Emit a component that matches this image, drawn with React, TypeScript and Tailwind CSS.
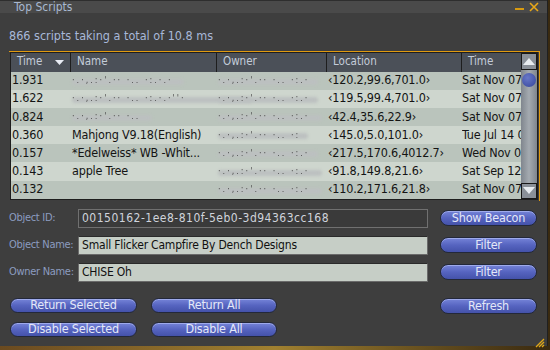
const font = "font-['DejaVu_Sans_Condensed','DejaVu_Sans',sans-serif]";

type Row = {
  time: string;
  name: string;
  owner: string;
  loc: string;
  date: string;
  hideName?: number;
  hideOwner?: number;
};

const rows: Row[] = [
  { time: "1.931", name: "", owner: "", loc: "‹120.2,99.6,701.0›", date: "Sat Nov 07", hideName: 112, hideOwner: 100 },
  { time: "1.622", name: "", owner: "", loc: "‹119.5,99.4,701.0›", date: "Sat Nov 07", hideName: 180, hideOwner: 100 },
  { time: "0.824", name: "", owner: "", loc: "‹42.4,35.6,22.9›", date: "Sat Nov 07", hideName: 80, hideOwner: 104 },
  { time: "0.360", name: "Mahjong V9.18(English)", owner: "", loc: "‹145.0,5.0,101.0›", date: "Tue Jul 14 0", hideOwner: 90 },
  { time: "0.157", name: "*Edelweiss* WB -Whit...", owner: "", loc: "‹217.5,170.6,4012.7›", date: "Wed Nov 0", hideOwner: 100 },
  { time: "0.143", name: "apple Tree", owner: "", loc: "‹91.8,149.8,21.6›", date: "Sat Sep 12", hideOwner: 104 },
  { time: "0.132", name: "", owner: "", loc: "‹110.2,171.6,21.8›", date: "Sat Nov 07", hideOwner: 104 },
];

function Hidden({ w }: { w: number }) {
  return (
    <span className="relative flex h-[14px] items-center" style={{ width: w }}>
      <span className="absolute inset-x-0 top-[5px] h-[6px] rounded-sm bg-[#bcc0c0] blur-[1.5px]" />
      <span className="relative text-[9px] leading-none tracking-[2px] text-[#505050] blur-[0.5px]">
        {"·.·,.:·'.·· ·.. ·:.·.·''·".slice(0, Math.floor(w / 5))}
      </span>
    </span>
  );
}

function Btn({ label, className }: { label: string; className: string }) {
  return (
    <button
      className={`flex items-center justify-center whitespace-nowrap rounded-full border border-[#23283a] bg-gradient-to-b from-[#7684d8] via-[#5664c0] to-[#4452aa] text-[12.5px] leading-none tracking-[-0.2px] text-[#e4e8f8] shadow-[inset_0_1px_0_rgba(200,210,255,0.5)] ${className}`}
    >
      {label}
    </button>
  );
}

function Field({ label, value, dark }: { label: string; value: string; dark?: boolean }) {
  return (
    <div className="flex items-center">
      <span className="w-[69px] whitespace-nowrap text-[11px] tracking-[-0.3px] text-[#8c9cc0]">{label}</span>
      <div
        className={`flex h-[19px] w-[350px] items-center whitespace-nowrap border px-[3px] text-[12px] ${
          dark
            ? "border-[#707070] bg-[#3a3a3a] tracking-[0.5px] text-[#d0d4dc]"
            : "border-[#6a6a6a] border-t-[#2a2a2a] bg-[#c6cec6] tracking-[-0.2px] text-[#101010]"
        }`}
      >
        {value}
      </div>
    </div>
  );
}

export default function App() {
  return (
    <div className={`relative h-[350px] w-[550px] overflow-hidden bg-gradient-to-r from-[#6a4a20] via-[#a08030] to-[#3a2a10] ${font}`}>
      <div className="flex h-[346px] w-[548px] flex-col border-r border-[#202020] bg-[#3e3e3e]">
        {/* title bar */}
        <div className="flex h-[16px] items-center justify-between border-t border-[#2e2e2e] bg-[#4a4a4a] pl-[14px] pr-[8px]">
          <span className="text-[12px] leading-none text-[#a8b8d0]">Top Scripts</span>
          <div className="flex items-center gap-[5px]">
            <span className="mt-[4px] h-[2px] w-[9px] bg-[#d89a10]" />
            <svg width="10" height="10" viewBox="0 0 10 10">
              <path d="M1 1 L9 9 M9 1 L1 9" stroke="#e8a818" strokeWidth="1.6" />
            </svg>
          </div>
        </div>

        <div className="mt-[17px] pl-[9px] text-[12.5px] leading-none text-[#a8b8d8]">
          866 scripts taking a total of 10.8 ms
        </div>

        {/* table */}
        <div className="ml-[9px] mt-[8px] w-[531px] border-r border-t border-[#e09a10] pb-[1px]">
          <div className="ml-[1px] mr-[1px] flex border border-[#1e1e1e]">
            <div className="flex w-[510px] flex-col">
              <div className="flex h-[19px] bg-[#4b5058] text-[11.5px] text-[#c4ccd8]">
                <div className="flex w-[60px] items-center justify-between border-r border-[#1e1e1e] pl-[6px] pr-[6px]">
                  <span>Time</span>
                  <svg width="9" height="5" viewBox="0 0 9 5">
                    <path d="M0 0 H9 L4.5 5 Z" fill="#e8ecf4" />
                  </svg>
                </div>
                <div className="flex w-[146px] items-center border-r border-[#1e1e1e] pl-[6px]">Name</div>
                <div className="flex w-[110px] items-center border-r border-[#1e1e1e] pl-[6px]">Owner</div>
                <div className="flex w-[135px] items-center border-r border-[#1e1e1e] pl-[6px]">Location</div>
                <div className="flex flex-1 items-center pl-[6px]">Time</div>
              </div>
              {rows.map((r, i) => (
                <div
                  key={i}
                  className={`flex h-[18.2px] items-center overflow-hidden whitespace-nowrap text-[12.5px] tracking-[-0.2px] text-[#141414] ${
                    i % 2 === 0 ? "bg-[#bac4bc]" : "bg-[#ced6ce]"
                  }`}
                >
                  <div className="w-[60px] pl-[1px]">{r.time}</div>
                  <div className="w-[146px] pl-[1px]">
                    {r.hideName ? <Hidden w={r.hideName} /> : r.name}
                  </div>
                  <div className="w-[110px] pl-[1px]">
                    {r.hideOwner ? <Hidden w={r.hideOwner} /> : r.owner}
                  </div>
                  <div className="w-[135px] pl-[1px]">{r.loc}</div>
                  <div className="flex-1 overflow-hidden">{r.date}</div>
                </div>
              ))}
            </div>
            {/* scrollbar */}
            <div className="flex w-[17px] flex-col bg-gradient-to-r from-[#80868e] via-[#a4aab0] to-[#80868e]">
              <div className="flex h-[17px] items-center justify-center border border-[#181818] bg-[#8a9098]">
                <svg width="12" height="7" viewBox="0 0 12 7">
                  <path d="M0 7 L6 0 L12 7 Z" fill="#e8ecf0" />
                </svg>
              </div>
              <div className="flex flex-1 justify-center pt-[3px]">
                <div className="h-[14px] w-[14px] rounded-full bg-[radial-gradient(circle_at_40%_35%,#6878c8,#34449a)]" />
              </div>
              <div className="flex h-[16px] items-center justify-center border border-[#181818] bg-[#8a9098]">
                <svg width="12" height="7" viewBox="0 0 12 7">
                  <path d="M0 0 L6 7 L12 0 Z" fill="#e8ecf0" />
                </svg>
              </div>
            </div>
          </div>
        </div>

        {/* form */}
        <div className="mt-[8px] flex flex-col gap-[8px] pl-[9px] pr-[10px]">
          <div className="flex items-center justify-between">
            <Field label="Object ID:" value="00150162-1ee8-810f-5eb0-3d94363cc168" dark />
            <Btn label="Show Beacon" className="h-[16px] w-[97px]" />
          </div>
          <div className="flex items-center justify-between">
            <Field label="Object Name:" value="Small Flicker Campfire By Dench Designs" />
            <Btn label="Filter" className="h-[16px] w-[97px]" />
          </div>
          <div className="flex items-center justify-between">
            <Field label="Owner Name:" value="CHISE Oh" />
            <Btn label="Filter" className="h-[16px] w-[97px]" />
          </div>
        </div>

        <div className="mt-[16px] flex justify-between pl-[10px] pr-[10px]">
          <div className="flex flex-col gap-[9px]">
            <div className="flex gap-[14px]">
              <Btn label="Return Selected" className="h-[15px] w-[127px]" />
              <Btn label="Return All" className="h-[15px] w-[126px]" />
            </div>
            <div className="flex gap-[14px]">
              <Btn label="Disable Selected" className="h-[15px] w-[127px]" />
              <Btn label="Disable All" className="h-[15px] w-[126px]" />
            </div>
          </div>
          <Btn label="Refresh" className="h-[16px] w-[97px]" />
        </div>

        <div className="mt-auto flex justify-end pb-[1px] pr-[2px]">
          <svg width="11" height="11" viewBox="0 0 11 11">
            <path d="M10 2 L2 10 M10 5 L5 10 M10 8 L8 10" stroke="#e0a818" strokeWidth="1.3" />
          </svg>
        </div>
      </div>
    </div>
  );
}
